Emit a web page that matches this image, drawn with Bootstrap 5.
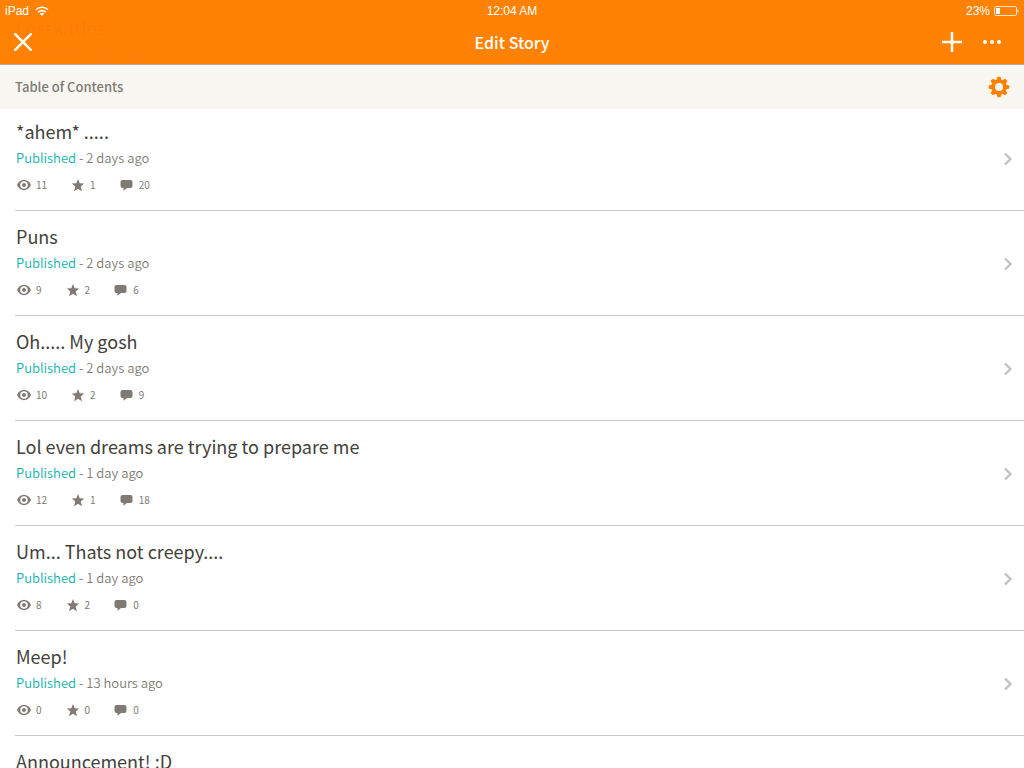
<!DOCTYPE html>
<html lang="en">
<head>
<meta charset="utf-8">
<meta name="viewport" content="width=device-width, initial-scale=1">
<title>Edit Story</title>
<link href="https://cdn.jsdelivr.net/npm/bootstrap@5.3.0/dist/css/bootstrap.min.css" rel="stylesheet">
<style>
  body { font-family: "Noto Sans CJK SC", "Noto Sans", sans-serif; color: #43413a; background: #fff; }
  .top-bar { background: #ff8205; border-bottom: 1px solid #b3aca4; height: 65px; color: #fff; }
  .status-bar { font: 12px/22px "Liberation Sans", Arial, sans-serif; height: 22px; padding: 0 5px; }
  .bar-side { flex: 1 1 0; }
  .device { gap: 6px; }
  .title-bar { height: 40px; padding: 0 14px; }
  .page-title { font-size: 16px; line-height: 24px; font-weight: 500; }
  .icon-btn { background: none; border: 0; padding: 0; color: inherit; display: flex; }
  .ghost-row { position: absolute; left: 16px; top: 13px; color: #000; opacity: .02; }
  .toc-bar { background: #f8f7f2; height: 44px; padding: 0 14px 0 15px; color: #807a75; }
  .toc-title { font-size: 13px; line-height: 20px; font-weight: 500; }
  .gear { color: #ff8205; }
  .parts { scrollbar-width: none; margin-top: -3px; }
  .parts::-webkit-scrollbar { display: none; }
  .part { height: 105px; margin-left: 15px; padding: 11px 11px 10px 1px; border-bottom: 1px solid #c8c7cc; color: inherit; }
  .part-title { font-size: 18px; line-height: 28px; font-weight: 400; }
  .part-date { font-size: 13px; line-height: 26px; font-weight: 350; color: #807a75; }
  .published { color: #12b3ac; }
  .stats { font-size: 10px; line-height: 16px; margin-top: 6px; gap: 23px; color: #807a75; }
  .stat { gap: 4px; }
</style>
</head>
<body>
<svg class="d-none" xmlns="http://www.w3.org/2000/svg">
  <symbol id="eye" viewBox="0 0 16 16"><path fill="currentColor" fill-rule="evenodd" d="M8 2.800C4.900 2.800 2.300 4.900 1 8c1.300 3.100 3.900 5.200 7 5.200s5.700-2.100 7-5.200c-1.300-3.100-3.900-5.200-7-5.200zm0 1.400a3.800 3.800 0 1 1 0 7.600 3.800 3.800 0 0 1 0-7.600zM8 6a2 2 0 1 0 0 4 2 2 0 0 0 0-4z"/></symbol>
  <symbol id="star" viewBox="0 0 16 16"><path fill="currentColor" d="M8 2l1.700 4.200 4.500.3-3.500 2.900 1.300 4.800L8 11.700l-4 2.500 1.300-4.800-3.500-2.900 4.500-.3z"/></symbol>
  <symbol id="bubble" viewBox="0 0 16 16"><path fill="currentColor" d="M3.500 3h8a2 2 0 0 1 2 2v4a2 2 0 0 1-2 2H8l-3.500 2.800V11h-1a2 2 0 0 1-2-2V5a2 2 0 0 1 2-2z"/></symbol>
  <symbol id="chevron" viewBox="0 0 10 14"><path fill="none" stroke="#c5c1be" stroke-width="2.400" d="M2 1.500L7.500 7 2 12.500"/></symbol>
</svg>

<div class="d-flex flex-column vh-100 overflow-hidden">
  <header class="top-bar position-relative flex-shrink-0">
    <div class="ghost-row" aria-hidden="true">
      <div class="part-title">Losskittles</div>
      <div class="part-date">Published - 2 days ago</div>
    </div>
    <div class="status-bar d-flex align-items-center position-relative">
      <div class="bar-side device d-flex align-items-center">iPad
        <svg width="14" height="10" viewBox="0 0 14 10" fill="none" stroke="#fff" stroke-width="1.600"><path d="M1 3.800a8.500 8.500 0 0 1 12 0M3.300 6.200a5.200 5.200 0 0 1 7.400 0"/><path fill="#fff" stroke="none" d="M7 10L4.900 7.900a3 3 0 0 1 4.200 0z"/></svg>
      </div>
      <div>12:04 AM</div>
      <div class="bar-side d-flex align-items-center justify-content-end gap-1">23%
        <svg width="25" height="10" viewBox="0 0 25 10"><rect x=".5" y=".5" width="22" height="9" rx="1.500" fill="none" stroke="#fff" stroke-opacity=".8"/><rect x="2" y="2" width="4" height="6" fill="#fff"/><path d="M23.500 3.200c1.200.4 1.200 3.200 0 3.600z" fill="#fff"/></svg>
      </div>
    </div>
    <div class="title-bar d-flex align-items-center position-relative">
      <div class="bar-side d-flex">
        <button type="button" class="icon-btn" aria-label="Close"><svg width="18" height="18" viewBox="2 2 18 18" stroke="#fff" stroke-width="2.400" stroke-linecap="round"><path d="M3.200 3.200l15.600 15.600M18.800 3.200L3.200 18.800"/></svg></button>
      </div>
      <h1 class="page-title m-0">Edit Story</h1>
      <div class="bar-side d-flex justify-content-end align-items-center gap-3">
        <button type="button" class="icon-btn" aria-label="Add part"><svg width="22" height="22" viewBox="0 0 22 22" stroke="#fff" stroke-width="2.500"><path d="M11 1v20M1 11h20"/></svg></button>
        <button type="button" class="icon-btn" aria-label="More"><svg width="31" height="22" viewBox="0 0 31 22" fill="#fff"><circle cx="6" cy="11" r="2"/><circle cx="13" cy="11" r="2"/><circle cx="20" cy="11" r="2"/></svg></button>
      </div>
    </div>
  </header>

  <section class="toc-bar d-flex align-items-center justify-content-between flex-shrink-0 position-relative z-1">
    <h2 class="toc-title m-0">Table of Contents</h2>
    <button type="button" class="icon-btn gear" aria-label="Settings"><svg width="22" height="22" viewBox="-11 -11 22 22"><circle r="5.800" fill="none" stroke="currentColor" stroke-width="3.600"/><g fill="currentColor"><path id="tooth" d="M-2.800-6.500L-1.500-10.300h3L2.800-6.500z"/><use href="#tooth" transform="rotate(45)"/><use href="#tooth" transform="rotate(90)"/><use href="#tooth" transform="rotate(135)"/><use href="#tooth" transform="rotate(180)"/><use href="#tooth" transform="rotate(225)"/><use href="#tooth" transform="rotate(270)"/><use href="#tooth" transform="rotate(315)"/></g></svg></button>
  </section>

  <main class="parts flex-grow-1 overflow-auto" id="parts"></main>
</div>

<script src="https://cdn.jsdelivr.net/npm/bootstrap@5.3.0/dist/js/bootstrap.bundle.min.js"></script>
<script>
  const parts = [
    ["*ahem* .....", "2 days ago", 11, 1, 20],
    ["Puns", "2 days ago", 9, 2, 6],
    ["Oh..... My gosh", "2 days ago", 10, 2, 9],
    ["Lol even dreams are trying to prepare me", "1 day ago", 12, 1, 18],
    ["Um... Thats not creepy....", "1 day ago", 8, 2, 0],
    ["Meep!", "13 hours ago", 0, 0, 0],
    ["Announcement! :D", "13 hours ago", 0, 0, 0]
  ];
  const stat = (icon, n) => `<span class="stat d-flex align-items-center"><svg width="16" height="16"><use href="#${icon}"/></svg>${n}</span>`;
  document.getElementById("parts").innerHTML = parts.map(([title, date, reads, votes, comments]) => `
    <a href="#" class="part d-flex justify-content-between text-decoration-none">
      <div>
        <h3 class="part-title m-0">${title}</h3>
        <div class="part-date"><span class="published">Published</span> - ${date}</div>
        <div class="stats d-flex">${stat("eye", reads)}${stat("star", votes)}${stat("bubble", comments)}</div>
      </div>
      <svg class="align-self-center" width="10" height="14"><use href="#chevron"/></svg>
    </a>`).join("");
</script>
</body>
</html>
